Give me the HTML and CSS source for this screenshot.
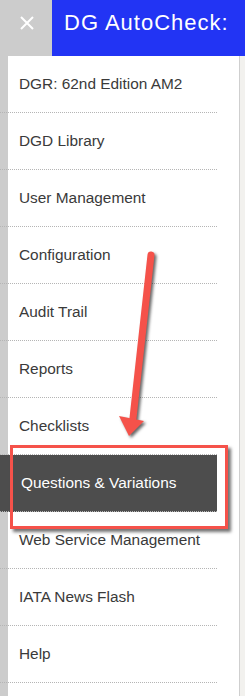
FILE: index.html
```html
<!DOCTYPE html>
<html lang="en">
<head>
    <meta charset="UTF-8">
    <meta name="viewport" content="width=device-width, initial-scale=1.0">
    <title>DG AutoCheck</title>
    <link rel="stylesheet" href="styles.css">
</head>
<body>
    <header class="top-bar">
        <div class="close-btn">
            <svg width="14" height="14" viewBox="0 0 14 14">
                <path d="M1 1 L13 13 M13 1 L1 13" stroke="#fff" stroke-width="2" fill="none"/>
            </svg>
        </div>
        <div class="title">DG AutoCheck:</div>
    </header>
    <nav class="side-menu">
        <ul class="menu-list">
            <li class="menu-item">DGR: 62nd Edition AM2</li>
            <li class="menu-item">DGD Library</li>
            <li class="menu-item">User Management</li>
            <li class="menu-item">Configuration</li>
            <li class="menu-item">Audit Trail</li>
            <li class="menu-item">Reports</li>
            <li class="menu-item">Checklists</li>
            <li class="menu-item active">Questions &amp; Variations</li>
            <li class="menu-item">Web Service Management</li>
            <li class="menu-item">IATA News Flash</li>
            <li class="menu-item">Help</li>
        </ul>
    </nav>

    <!-- screenshot annotation -->
    <div class="highlight-box"></div>
    <svg class="arrow" width="245" height="696" viewBox="0 0 245 696">
        <g class="arrow-shape">
            <line x1="151" y1="255" x2="133" y2="418" stroke="#f5524a" stroke-width="7" stroke-linecap="round"/>
            <polygon points="119,416 144,421 129,436" fill="#f5524a"/>
        </g>
    </svg>
</body>
</html>
```

FILE: styles.css
```css
* {
    box-sizing: border-box;
}

body {
    margin: 0;
    background-color: #f2f1ee;
    font-family: 'Liberation Sans', Arial, sans-serif;
    font-size: 14px;
    position: relative;
    height: 696px;
    overflow: hidden;
}

.top-bar {
    display: flex;
    height: 56px;
}

.close-btn {
    width: 52px;
    background-color: #cccccc;
    display: flex;
    align-items: center;
    justify-content: center;
    padding-bottom: 11px;
    padding-left: 1px;
}

.title {
    flex: 1;
    background-color: #2234f4;
    color: #fff;
    font-size: 22px;
    letter-spacing: 1px;
    padding: 10px 0 0 12px;
    white-space: nowrap;
    overflow: hidden;
}

.side-menu {
    width: 240px;
    height: 640px;
    background: linear-gradient(to right, #cccccc 8px, #fff 8px);
    border-right: 1px solid #cfcfcf;
}

.menu-list {
    list-style: none;
    margin: 0;
    padding: 0;
}

.menu-item {
    width: 217px;
    height: 57px;
    display: flex;
    align-items: center;
    padding-left: 19px;
    padding-bottom: 1px;
    border-bottom: 1px dotted #b5b5b5;
    font-size: 1.1em;
    color: #3a3a3a;
    white-space: nowrap;
}

.menu-item.active {
    background-color: #4d4d4d;
    color: #fff;
    padding-left: 21px;
}

.highlight-box {
    position: absolute;
    left: 10px;
    top: 445px;
    width: 218px;
    height: 84px;
    border: 3px solid #f5524a;
    box-shadow: 3px 3px 3px rgba(0, 0, 0, 0.55);
}

.arrow {
    position: absolute;
    left: 0;
    top: 0;
    pointer-events: none;
}

.arrow-shape {
    filter: drop-shadow(2px 2px 1.5px rgba(0, 0, 0, 0.6));
}
```
